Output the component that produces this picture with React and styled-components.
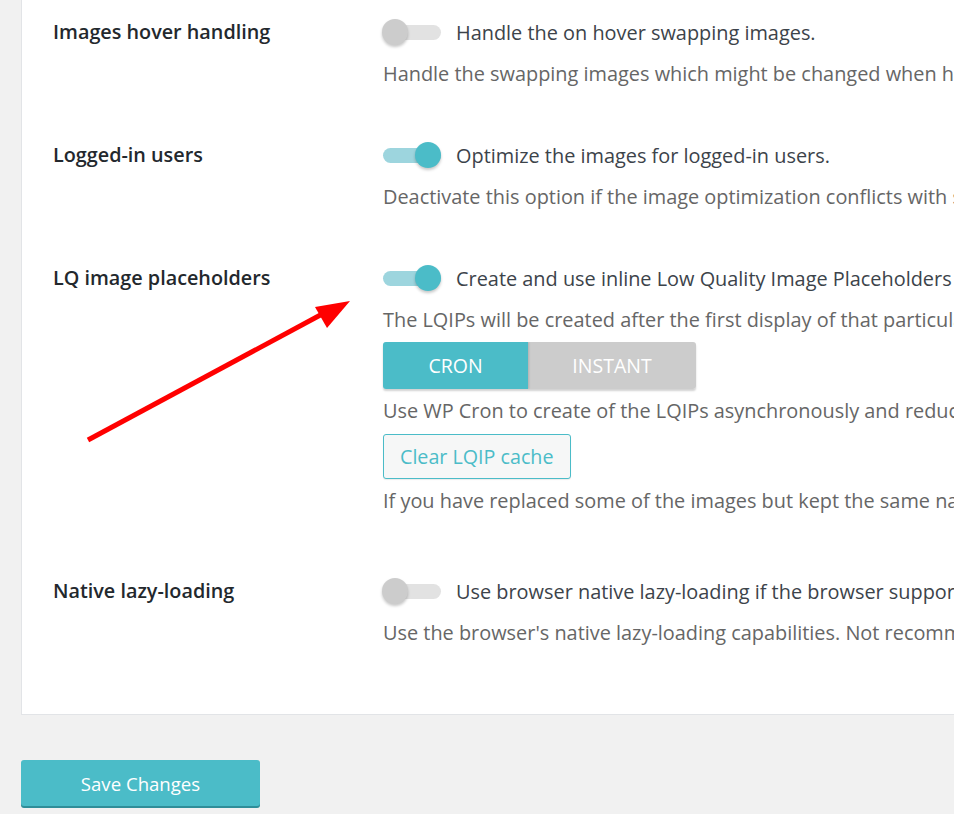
import React from "react";
import styled, { createGlobalStyle } from "styled-components";

const Global = createGlobalStyle`
  html, body { margin: 0; padding: 0; background: #f1f1f1; }
  body { font-family: "Open Sans", "Noto Sans", sans-serif; overflow: hidden; }
  * { box-sizing: border-box; }
`;

const Page = styled.div`
  position: relative;
  width: 954px;
  height: 814px;
  padding-left: 21px;
  overflow: hidden;
`;

const Panel = styled.div`
  background: #fff;
  border-left: 1px solid #e2e4e7;
  border-bottom: 1px solid #e2e4e7;
  width: 1100px;
  padding: 18px 0 67px 31px;
`;

const Row = styled.div`
  display: grid;
  grid-template-columns: 330px 1fr;
  padding-bottom: ${(p) => p.$after}px;
`;

const Label = styled.div`
  font-size: 19.8px;
  font-weight: 600;
  line-height: 28px;
  color: #23282d;
  white-space: nowrap;
`;

const Field = styled.div`
  display: flex;
  flex-direction: column;
  align-items: flex-start;
  white-space: nowrap;
`;

const ToggleLine = styled.div`
  display: flex;
  align-items: center;
  height: 28px;
  gap: 15px;
  font-size: 19.9px;
  color: #3c434a;
`;

const Track = styled.span`
  position: relative;
  display: inline-block;
  flex: none;
  width: 58px;
  height: 15px;
  border-radius: 8px;
  background: ${(p) => (p.$on ? "#9dd5de" : "#e2e2e2")};
`;

const Knob = styled.span`
  position: absolute;
  top: 50%;
  left: ${(p) => (p.$on ? "32px" : "-1px")};
  width: 26px;
  height: 26px;
  margin-top: -13px;
  border-radius: 50%;
  background: ${(p) => (p.$on ? "#4bbcc8" : "#cccccc")};
  box-shadow: 0 2px 3px rgba(0, 0, 0, 0.22);
`;

const Desc = styled.div`
  margin-top: ${(p) => p.$top ?? 14}px;
  font-size: 19.9px;
  line-height: 28px;
  color: #666;
`;

const Segmented = styled.div`
  display: flex;
  margin-top: 8px;
  border-radius: 3px;
  overflow: hidden;
  box-shadow: 0 2px 2px rgba(0, 0, 0, 0.18);
`;

const Segment = styled.div`
  height: 47px;
  width: ${(p) => p.$w}px;
  display: flex;
  align-items: center;
  justify-content: center;
  font-size: 19.5px;
  color: #fff;
  background: ${(p) => (p.$active ? "#4bbcc8" : "#cccccc")};
  box-shadow: ${(p) => (p.$active ? "1px 0 2px rgba(0,0,0,0.15)" : "none")};
  z-index: ${(p) => (p.$active ? 1 : 0)};
`;

const OutlineButton = styled.div`
  margin-top: 9px;
  height: 45px;
  padding: 0 16px;
  display: flex;
  align-items: center;
  border: 1px solid #4bbcc8;
  border-radius: 3px;
  background: #f6f7f7;
  color: #4bbcc8;
  font-size: 19.7px;
  box-shadow: 0 1px 1px rgba(0, 0, 0, 0.08);
`;

const Footer = styled.div`
  padding-top: 45px;
`;

const SaveButton = styled.div`
  width: 239px;
  height: 46px;
  border-radius: 3px;
  background: #4bbcc8;
  color: #fff;
  font-size: 18.6px;
  display: flex;
  align-items: center;
  justify-content: center;
  box-shadow: 0 2px 0 #2f8e99;
`;

const Arrow = styled.svg`
  position: absolute;
  left: 0;
  top: 0;
  pointer-events: none;
`;

function Toggle({ on, children }) {
  return (
    <ToggleLine>
      <Track $on={on}>
        <Knob $on={on} />
      </Track>
      <span>{children}</span>
    </ToggleLine>
  );
}

export default function App() {
  return (
    <Page>
      <Global />
      <Panel>
        <Row $after={53}>
          <Label>Images hover handling</Label>
          <Field>
            <Toggle on={false}>Handle the on hover swapping images.</Toggle>
            <Desc>Handle the swapping images which might be changed when hovering over them with the mouse.</Desc>
          </Field>
        </Row>
        <Row $after={53}>
          <Label>Logged-in users</Label>
          <Field>
            <Toggle on>Optimize the images for logged-in users.</Toggle>
            <Desc>Deactivate this option if the image optimization conflicts with some of your plugins.</Desc>
          </Field>
        </Row>
        <Row $after={62}>
          <Label>LQ image placeholders</Label>
          <Field>
            <Toggle on>Create and use inline Low Quality Image Placeholders (LQIP).</Toggle>
            <Desc>The LQIPs will be created after the first display of that particular image.</Desc>
            <Segmented>
              <Segment $active $w={145}>CRON</Segment>
              <Segment $w={168}>INSTANT</Segment>
            </Segmented>
            <Desc $top={8}>Use WP Cron to create of the LQIPs asynchronously and reduce the page load time.</Desc>
            <OutlineButton>Clear LQIP cache</OutlineButton>
            <Desc $top={8}>If you have replaced some of the images but kept the same names, clear the LQIP cache.</Desc>
          </Field>
        </Row>
        <Row $after={0}>
          <Label>Native lazy-loading</Label>
          <Field>
            <Toggle on={false}>Use browser native lazy-loading if the browser supports it.</Toggle>
            <Desc>Use the browser's native lazy-loading capabilities. Not recommended for most sites.</Desc>
          </Field>
        </Row>
      </Panel>
      <Footer>
        <SaveButton>Save Changes</SaveButton>
      </Footer>
      <Arrow width="954" height="814" viewBox="0 0 954 814">
        <line x1="88" y1="440" x2="326" y2="312" stroke="#ff0000" strokeWidth="5" />
        <polygon points="350,301 315,307 327,328" fill="#ff0000" />
      </Arrow>
    </Page>
  );
}
